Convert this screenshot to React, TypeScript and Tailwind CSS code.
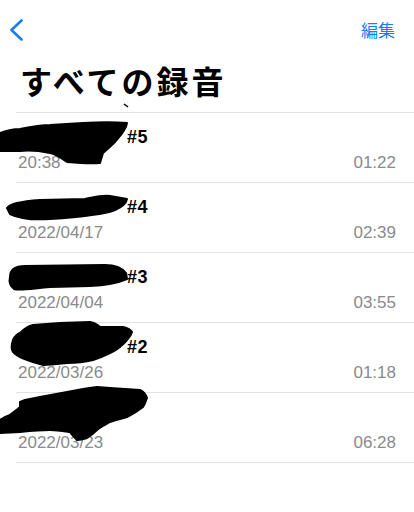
import React from "react";

type Rec = { id: string; title: string; date: string; dur: string };

const recs: Rec[] = [
  { id: "5", title: "#5", date: "20:38", dur: "01:22" },
  { id: "4", title: "#4", date: "2022/04/17", dur: "02:39" },
  { id: "3", title: "#3", date: "2022/04/04", dur: "03:55" },
  { id: "2", title: "#2", date: "2022/03/26", dur: "01:18" },
  { id: "1", title: "", date: "2022/03/23", dur: "06:28" },
];

const sans = "font-['Liberation_Sans','Noto_Sans_CJK_JP',sans-serif]";
const jp = "font-['Noto_Sans_CJK_JP','Noto_Sans',sans-serif]";

function Scribbles() {
  return (
    <svg
      className="pointer-events-none absolute left-0 top-0"
      width="414"
      height="512"
      viewBox="0 0 414 512"
    >
      <g fill="#000" stroke="#000" strokeWidth="2" strokeLinejoin="round">
        <path d="M124,104 L128,107" fill="none" strokeWidth="1.5" />
        <path d="M0,133 C8,130 14,129 20,129 C30,127 40,125 50,125 L83,123 C100,122 115,122 127,123 C126,130 120,136 115,142 C110,147 106,150 103,153 L100,163 C90,164 78,163 67,162 C60,157 56,154 50,153 C40,151 30,150 20,151 L0,151 Z" />
        <path d="M7,208 C10,203 25,201 40,200 L85,199 C95,197 102,195 110,196 L127,199 C126,204 122,207 115,210 C105,214 80,217 50,219 C35,220 20,219 10,214 Z" />
        <path d="M10,277 C10,270 15,266 25,266 L105,265 C115,265 122,268 126,273 L127,279 C120,282 110,285 90,286 L50,287 C35,288 20,291 14,289 C10,286 9,281 10,277 Z" />
        <path d="M13,340 C15,336 17,334 20,333 C25,328 28,326 33,325 L60,323 L90,322 C95,323 98,325 100,327 L123,327 C128,328 131,330 132,332 C131,336 129,338 127,340 C125,343 122,345 120,347 C116,350 113,352 110,353 C104,356 99,358 93,360 C85,362 76,363 67,363 C58,364 50,365 43,365 C33,362 26,360 20,357 C16,355 13,353 12,350 C11,346 12,343 13,340 Z" />
        <path d="M20,402 L25,400 C30,399 35,398 40,397 L67,392 C77,390 87,388 97,387 L110,388 L140,390 C144,392 146,395 147,398 C146,401 145,404 143,407 C138,411 133,414 127,417 C121,419 115,420 110,422 C105,425 101,427 97,430 C94,433 90,436 87,438 C84,439 80,440 77,440 C74,437 72,435 70,432 C63,431 57,430 50,430 C40,430 30,431 20,432 L0,433 L0,420 C3,418 7,416 10,415 C13,412 17,410 20,407 Z" />
      </g>
    </svg>
  );
}

export default function App() {
  return (
    <div className="relative h-[512px] w-[414px] overflow-hidden bg-white">
      <div className="mt-2 flex h-11 items-center justify-between pl-[9px] pr-[19px]">
        <svg width="14" height="22" viewBox="0 0 14 22">
          <polyline
            points="12.5,1.5 2.5,11 12.5,20.5"
            fill="none"
            stroke="#1a7cf5"
            strokeWidth="2.6"
            strokeLinecap="round"
            strokeLinejoin="round"
          />
        </svg>
        <span className={`${jp} text-[17px] leading-[22px] text-[#1a7cf5]`}>編集</span>
      </div>
      <div className="mt-2 pb-[11px] pl-[20px]">
        <h1 className={`${jp} text-[32px] font-bold leading-[41px] tracking-[3px] text-black`}>
          すべての録音
        </h1>
      </div>
      <div className="ml-4 border-t border-[#e2e2e4]">
        {recs.map((r) => (
          <div key={r.id} className="h-[70px] border-b border-[#e2e2e4] pr-[18px] pt-[13px]">
            <div className={`${sans} h-[22px] pl-[111px] text-[18px] font-bold leading-[22px] tracking-[0.5px] text-black`}>
              {r.title}
            </div>
            <div
              className={`${sans} mt-1 flex items-center justify-between pl-[2px] text-[17px] leading-[22px] text-[#8a8a8e]`}
            >
              <span>{r.date}</span>
              <span>{r.dur}</span>
            </div>
          </div>
        ))}
      </div>
      <Scribbles />
    </div>
  );
}
